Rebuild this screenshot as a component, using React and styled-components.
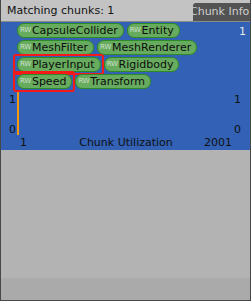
import React from 'react';
import styled, {createGlobalStyle} from 'styled-components';

const Global = createGlobalStyle`
html, body {
  margin: 0;
  padding: 0;
  background: #b3b3b3;
}
`;

const Window = styled.div`
width: 251px;
height: 301px;
box-sizing: border-box;
border: 1px solid #474747;
border-top: none;
background: #b3b3b3;
display: flex;
flex-direction: column;
font-family: 'DejaVu Sans', Verdana, sans-serif;
font-size: 11px;
color: #111;
overflow: hidden;
`;

const Header = styled.div`
height: 21px;
flex: none;
display: flex;
align-items: flex-end;
justify-content: space-between;
background: #c3c3c3;
border-bottom: 1px solid #8a8a8a;
`;

const Title = styled.div`
padding: 0 0 3px 6px;
line-height: 14px;
`;

const Tab = styled.div`
width: 57px;
height: 18px;
box-sizing: border-box;
padding: 2px 0 0 0;
background: #535353;
border-radius: 3px 0 0 0;
color: #cfcfcf;
white-space: nowrap;
overflow: hidden;
text-indent: -3px;
`;

const Panel = styled.div`
height: 128px;
flex: none;
background: #3261b5;
display: flex;
flex-direction: column;
padding: 0 4px 0 8px;
`;

const TopArea = styled.div`
display: flex;
justify-content: space-between;
`;

const Chips = styled.div`
display: flex;
flex-direction: column;
gap: 2px;
padding: 1px 0 0 8px;
`;

const ChipRow = styled.div`
display: flex;
gap: 3px;
`;

const Chip = styled.span`
position: relative;
height: 15px;
box-sizing: border-box;
display: inline-flex;
align-items: center;
padding: 0 5px 0 2px;
background: #67ab5f;
border: 1px solid #2d8a27;
border-radius: 7px;
line-height: 13px;
color: #0d0d0d;

&::after {
  content: '';
  display: ${p => (p.$marked ? 'block' : 'none')};
  position: absolute;
  inset: -4px -4px -4px -5px;
  border: 2px solid #f51a1a;
  border-radius: 3px;
}
`;

const Access = styled.span`
font-size: 7px;
color: #cfe0cb;
margin-right: 1px;
letter-spacing: -0.3px;
`;

const Count = styled.div`
padding: 4px 0 0 0;
line-height: 12px;
color: #e8e8e8;
`;

const Graph = styled.div`
flex: 1;
display: flex;
justify-content: space-between;
padding: 2px 5px 0 0;
`;

const Axis = styled.div`
display: flex;
flex-direction: column;
justify-content: space-between;
padding: 3px 0 0 0;
height: 42px;
line-height: 12px;
`;

const Plot = styled.div`
flex: 1;
display: flex;
`;

const Bar = styled.div`
width: 2px;
height: 44px;
margin-left: 1px;
background: #f59a10;
`;

const Footer = styled.div`
display: grid;
grid-template-columns: 1fr auto 1fr;
padding: 0 14px 1px 11px;
line-height: 12px;
`;

const FooterEnd = styled.span`
justify-self: end;
`;

const Rest = styled.div`
flex: 1;
display: flex;
flex-direction: column;
justify-content: flex-end;
`;

const Strip = styled.div`
height: 22px;
background: #aaaaaa;
`;

const rows = [
  [{name: 'CapsuleCollider'}, {name: 'Entity'}],
  [{name: 'MeshFilter'}, {name: 'MeshRenderer'}],
  [{name: 'PlayerInput', marked: true}, {name: 'Rigidbody'}],
  [{name: 'Speed', marked: true}, {name: 'Transform'}]
];

export default function App() {
  return (
    <Window>
      <Global/>
      <Header>
        <Title>Matching chunks: 1</Title>
        <Tab>Chunk Info</Tab>
      </Header>
      <Panel>
        <TopArea>
          <Chips>
            {rows.map((row, idx) => (
              <ChipRow key={idx}>
                {row.map(c => (
                  <Chip key={c.name} $marked={c.marked}>
                    <Access>RW</Access>{c.name}
                  </Chip>
                ))}
              </ChipRow>
            ))}
          </Chips>
          <Count>1</Count>
        </TopArea>
        <Graph>
          <Plot>
            <Axis><span>1</span><span>0</span></Axis>
            <Bar/>
          </Plot>
          <Axis><span>1</span><span>0</span></Axis>
        </Graph>
        <Footer>
          <span>1</span>
          <span>Chunk Utilization</span>
          <FooterEnd>2001</FooterEnd>
        </Footer>
      </Panel>
      <Rest><Strip/></Rest>
    </Window>
  );
}
